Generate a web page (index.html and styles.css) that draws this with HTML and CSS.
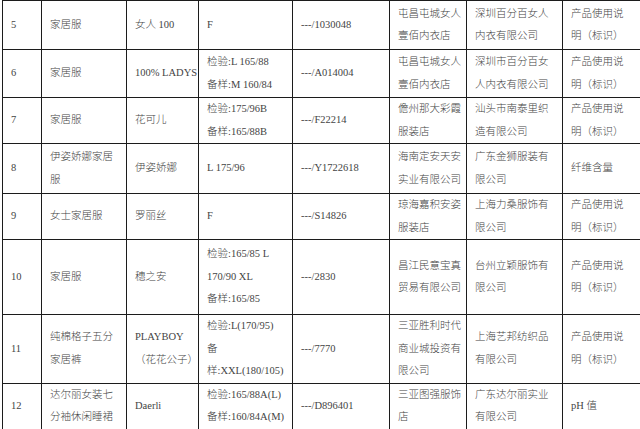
FILE: index.html
```html
<!DOCTYPE html>
<html lang="zh-CN">
<head>
<meta charset="utf-8">
<title>抽查结果</title>
<link rel="stylesheet" href="styles.css">
</head>
<body>
<div class="wrap">
<table class="grid">
  <colgroup>
    <col class="c1"><col class="c2"><col class="c3"><col class="c4"><col class="c5"><col class="c6"><col class="c7"><col class="c8">
  </colgroup>
  <tbody>
    <tr class="r5">
      <td>5</td><td>家居服</td><td>女人 100</td><td>F</td><td>---/1030048</td>
      <td>屯昌屯城女人<br>壹佰内衣店</td><td>深圳百分百女人<br>内衣有限公司</td><td>产品使用说<br>明（标识）</td>
    </tr>
    <tr class="r6">
      <td>6</td><td>家居服</td><td>100% LADYS</td><td>检验:L 165/88<br>备样:M 160/84</td><td>---/A014004</td>
      <td>屯昌屯城女人<br>壹佰内衣店</td><td>深圳市百分百女<br>人内衣有限公司</td><td>产品使用说<br>明（标识）</td>
    </tr>
    <tr class="r7">
      <td>7</td><td>家居服</td><td>花可儿</td><td>检验:175/96B<br>备样:165/88B</td><td>---/F22214</td>
      <td>儋州那大彩霞<br>服装店</td><td>汕头市南泰里织<br>造有限公司</td><td>产品使用说<br>明（标识）</td>
    </tr>
    <tr class="r8">
      <td>8</td><td>伊姿娇娜家居<br>服</td><td>伊姿娇娜</td><td>L 175/96</td><td>---/Y1722618</td>
      <td>海南定安天安<br>实业有限公司</td><td>广东金狮服装有<br>限公司</td><td>纤维含量</td>
    </tr>
    <tr class="r9">
      <td>9</td><td>女士家居服</td><td>罗丽丝</td><td>F</td><td>---/S14826</td>
      <td>琼海嘉积安姿<br>服装店</td><td>上海力桑服饰有<br>限公司</td><td>产品使用说<br>明（标识）</td>
    </tr>
    <tr class="r10">
      <td>10</td><td>家居服</td><td>穗之安</td><td>检验:165/85 L<br>170/90 XL<br>备样:165/85</td><td>---/2830</td>
      <td>昌江民意宝真<br>贸易有限公司</td><td>台州立颖服饰有<br>限公司</td><td>产品使用说<br>明（标识）</td>
    </tr>
    <tr class="r11">
      <td>11</td><td>纯棉格子五分<br>家居裤</td><td>PLAYBOY<br>（花花公子）</td><td>检验:L(170/95)<br>备<br>样:XXL(180/105)</td><td>---/7770</td>
      <td>三亚胜利时代<br>商业城投资有<br>限公司</td><td>上海艺邦纺织品<br>有限公司</td><td>产品使用说<br>明（标识）</td>
    </tr>
    <tr class="r12">
      <td>12</td><td>达尔丽女装七<br>分袖休闲睡裙</td><td>Daerli</td><td>检验:165/88A(L)<br>备样:160/84A(M)</td><td>---/D896401</td>
      <td>三亚图强服饰<br>店</td><td>广东达尔丽实业<br>有限公司</td><td>pH 值</td>
    </tr>
  </tbody>
</table>
</div>
</body>
</html>
```

FILE: styles.css
```css
html, body {
  margin: 0;
  padding: 0;
  background: #ffffff;
}
body {
  overflow: hidden;
  width: 640px;
  height: 429px;
}
.wrap {
  padding-left: 2px;
  width: 660px;
}
.grid {
  border-collapse: collapse;
  table-layout: fixed;
  width: 646px;
  font-family: "Liberation Serif", "Noto Sans CJK SC", serif;
  font-size: 10.5px;
  font-weight: 300;
  line-height: 22.5px;
  color: #444444;
}
.grid td {
  border: 1px solid #1c1c1c;
  padding: 0 8px;
  vertical-align: middle;
  white-space: nowrap;
  overflow: hidden;
}
.c1 { width: 39px; }
.c2 { width: 85px; }
.c3 { width: 72px; }
.c4 { width: 94px; }
.c5 { width: 97px; }
.c6 { width: 77px; }
.c7 { width: 96px; }
.c8 { width: 86px; }
.r5 { height: 49px; }
.r6 { height: 48px; }
.r7 { height: 45px; }
.r8 { height: 50px; }
.r9 { height: 45px; }
.r10 { height: 75px; }
.r11 { height: 67px; }
.r12 { height: 46px; }
```
